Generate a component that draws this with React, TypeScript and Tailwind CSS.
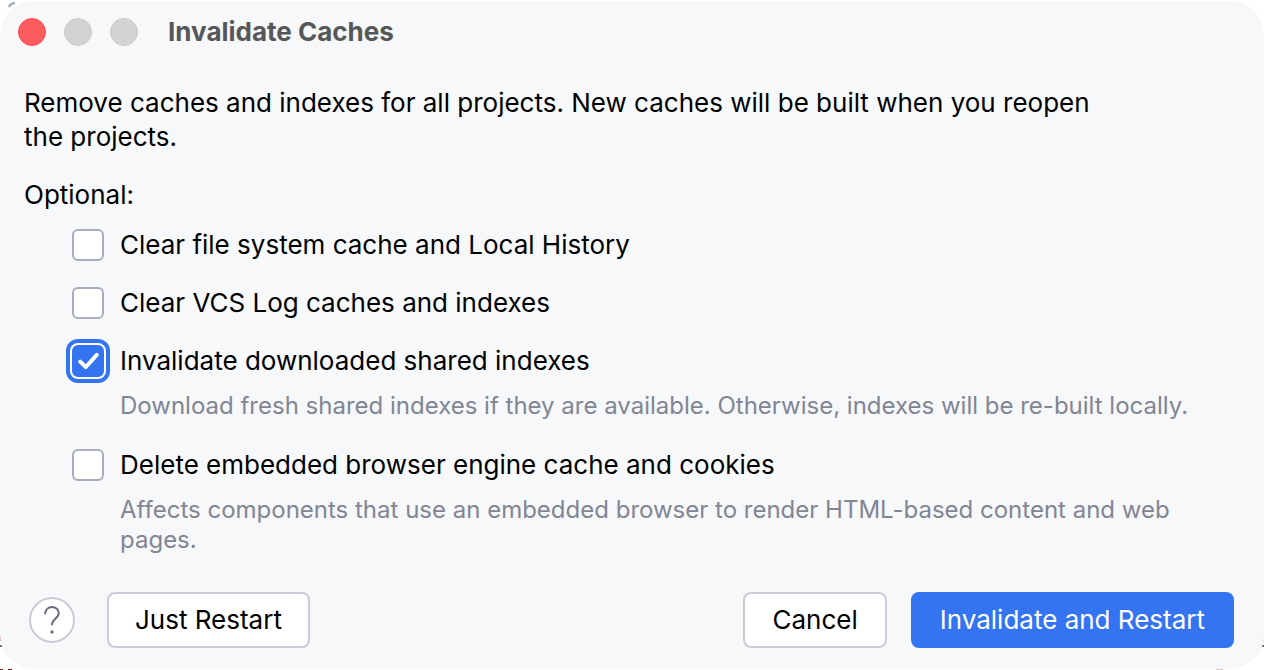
import { useState } from "react";

const options = [
  { id: "fs", label: "Clear file system cache and Local History" },
  { id: "vcs", label: "Clear VCS Log caches and indexes" },
  {
    id: "shared",
    label: "Invalidate downloaded shared indexes",
    hint: "Download fresh shared indexes if they are available. Otherwise, indexes will be re-built locally.",
  },
  {
    id: "browser",
    label: "Delete embedded browser engine cache and cookies",
    hint: "Affects components that use an embedded browser to render HTML-based content and web pages.",
  },
];

type OptionProps = {
  id: string;
  label: string;
  hint?: string;
  checked: boolean;
  onToggle: () => void;
};

function Option({ id, label, hint, checked, onToggle }: OptionProps) {
  return (
    <li>
      <div className="flex items-center gap-4">
        <span className="relative grid size-8 shrink-0 place-items-center">
          <input
            id={id}
            type="checkbox"
            checked={checked}
            onChange={onToggle}
            aria-describedby={hint ? `${id}-hint` : undefined}
            className="size-8 appearance-none rounded-md border-2 border-[#a8adbd] bg-white checked:border-[#3574f0] checked:bg-[#3574f0] checked:shadow-[0_0_0_2px_#ffffff,0_0_0_6px_#3574f0]"
          />
          {checked && (
            <svg
              className="pointer-events-none absolute inset-0 size-8"
              viewBox="0 0 32 32"
              fill="none"
              stroke="white"
              strokeWidth="4"
              strokeLinecap="round"
              strokeLinejoin="round"
            >
              <path d="M8.2 16.6L13.8 22L24.8 9.8" />
            </svg>
          )}
        </span>
        <label htmlFor={id}>{label}</label>
      </div>
      {hint && (
        <p
          id={`${id}-hint`}
          className="mt-[13px] ml-12 pb-[3px] text-2xl leading-[30px] text-[#818594]"
        >
          {hint}
        </p>
      )}
    </li>
  );
}

// bits of the editor window that show past the rounded corners
function Backdrop() {
  return (
    <div aria-hidden="true" className="pointer-events-none absolute inset-0">
      <svg className="absolute top-0 left-0 size-5" viewBox="0 0 20 20">
        <path
          d="M9 7C10 4 12 3.2 15 3"
          fill="none"
          stroke="#a8adc2"
          strokeWidth="2.5"
        />
      </svg>
      <svg className="absolute bottom-0 left-0 h-12 w-4" viewBox="0 0 16 48">
        <path d="M0 3L1 5V19H0Z" fill="#c76a70" />
        <path d="M0 23H2V25H0Z" fill="#6c6c70" />
        <path d="M0 47H3V48H0ZM8 47H12V48H8Z" fill="#8b2027" />
      </svg>
      <svg className="absolute right-0 bottom-0 h-12 w-12" viewBox="0 0 48 48">
        <path d="M47 3H48V20H47Z" fill="#e9d6d6" />
        <path d="M46 23H48V25H46Z" fill="#6c6c70" />
        <path d="M0 47H7V48H0Z" fill="#d9c4c4" />
      </svg>
    </div>
  );
}

export default function App() {
  const [checked, setChecked] = useState(["shared"]);

  const toggle = (id: string) =>
    setChecked((prev) =>
      prev.includes(id) ? prev.filter((x) => x !== id) : [...prev, id]
    );

  return (
    <div className="relative min-h-screen bg-white py-px font-['Inter',sans-serif] text-[26px] leading-[34px] text-black">
      <Backdrop />
      <div
        role="dialog"
        aria-labelledby="dialog-title"
        className="relative rounded-[34px] bg-[#f7f8fa] pb-[21px]"
      >
        <header className="flex h-[62px] items-center gap-[18px] px-[18px]">
          <button
            aria-label="Close"
            className="size-7 rounded-full border border-[#f5464b] bg-[#ff5c60]"
          />
          <button
            aria-label="Minimize"
            disabled
            className="size-7 rounded-full border border-[#c9cacc] bg-[#d2d3d5]"
          />
          <button
            aria-label="Zoom"
            disabled
            className="size-7 rounded-full border border-[#c9cacc] bg-[#d2d3d5]"
          />
          <h1 id="dialog-title" className="ml-3 font-bold text-[#565758]">
            Invalidate Caches
          </h1>
        </header>

        <main className="px-6 pt-[23px]">
          <p className="max-w-[1100px]">
            Remove caches and indexes for all projects. New caches will be built
            when you reopen the projects.
          </p>

          <p className="mt-6">Optional:</p>
          <ul className="mt-4 ml-12 space-y-6">
            {options.map((option) => (
              <Option
                key={option.id}
                {...option}
                checked={checked.includes(option.id)}
                onToggle={() => toggle(option.id)}
              />
            ))}
          </ul>
        </main>

        <footer className="mt-[34px] flex items-center gap-6 pr-[30px] pl-[29px]">
          <button
            aria-label="Help"
            className="grid size-[46px] place-items-center rounded-full border-2 border-[#c9ccd6] bg-white"
          >
            <svg
              className="h-7 w-4"
              viewBox="0 0 16 28"
              fill="none"
              stroke="#6c707e"
              strokeWidth="2"
              strokeLinecap="round"
            >
              <path d="M1.2 7.5C1.2 3.8 4.2 1 8 1C11.8 1 14.8 3.8 14.8 7.2C14.8 12 8 13 8 18.5" />
              <circle cx="8" cy="26" r="1.7" fill="#6c707e" stroke="none" />
            </svg>
          </button>
          <button className="ml-2 h-14 rounded-lg border-2 border-[#c9ccd6] bg-white px-[26px]">
            Just Restart
          </button>
          <button className="ml-auto h-14 rounded-lg border-2 border-[#c9ccd6] bg-white px-[27px]">
            Cancel
          </button>
          <button className="h-14 rounded-lg bg-[#3574f0] px-[29px] text-white">
            Invalidate and Restart
          </button>
        </footer>
      </div>
    </div>
  );
}
